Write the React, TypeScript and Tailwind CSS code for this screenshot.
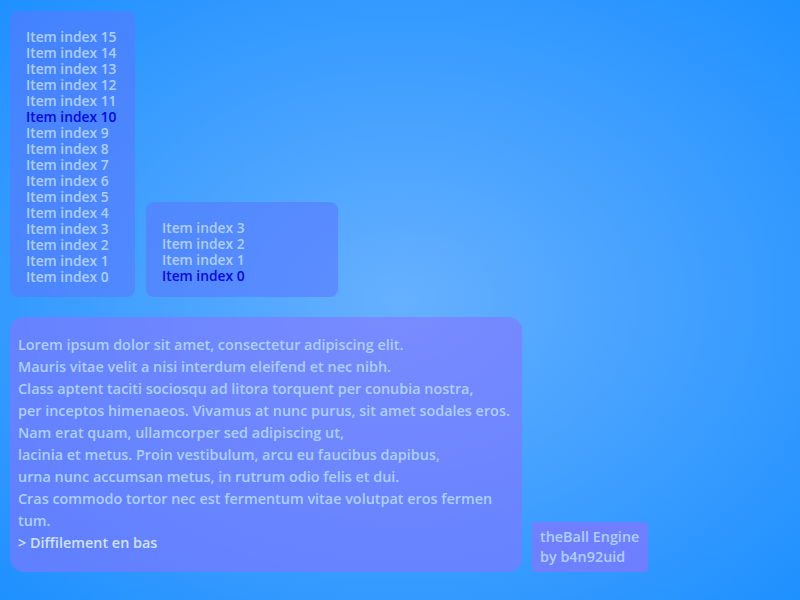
const bigList = Array.from({ length: 16 }, (_, i) => 15 - i)
const smallList = [3, 2, 1, 0]

const lines = [
  "Lorem ipsum dolor sit amet, consectetur adipiscing elit.",
  "Mauris vitae velit a nisi interdum eleifend et nec nibh.",
  "Class aptent taciti sociosqu ad litora torquent per conubia nostra,",
  "per inceptos himenaeos. Vivamus at nunc purus, sit amet sodales eros.",
  "Nam erat quam, ullamcorper sed adipiscing ut,",
  "lacinia et metus. Proin vestibulum, arcu eu faucibus dapibus,",
  "urna nunc accumsan metus, in rutrum odio felis et dui.",
  "Cras commodo tortor nec est fermentum vitae volutpat eros fermen",
  "tum.",
]

function ItemList({ items, active }: { items: number[]; active: number }) {
  return (
    <div className="flex flex-col">
      {items.map((n) => (
        <div
          key={n}
          className={
            n === active
              ? "h-4 whitespace-nowrap text-[13.8px] leading-4 text-[#0808e0]"
              : "h-4 whitespace-nowrap text-[13.8px] leading-4 text-[#aed0ff]"
          }
        >
          Item index {n}
        </div>
      ))}
    </div>
  )
}

export default function App() {
  return (
    <div
      className="flex h-[600px] w-[800px] flex-col gap-5 bg-[radial-gradient(ellipse_at_center,#66b0ff_0%,#1e90ff_100%)] px-[10px] pt-[11px] font-semibold"
      style={{ fontFamily: "'Open Sans', Lato, sans-serif" }}
    >
      <div className="flex items-end gap-[11px]">
        <div className="h-[286px] w-[125px] rounded-lg bg-[rgba(90,120,255,0.6)] pl-4 pt-[18px]">
          <ItemList items={bigList} active={10} />
        </div>
        <div className="h-[95px] w-[192px] rounded-lg bg-[rgba(90,120,255,0.6)] pl-4 pt-[18px]">
          <ItemList items={smallList} active={0} />
        </div>
      </div>
      <div className="flex items-end gap-[10px]">
        <div className="h-[255px] w-[512px] rounded-[14px] bg-[rgba(135,115,255,0.6)] pl-2 pt-[17px] text-[14.4px] leading-[22px] text-[#aed0ff]">
          {lines.map((l, i) => (
            <div key={i} className="whitespace-nowrap">
              {l}
            </div>
          ))}
          <div className="text-[#cfe3ff]">&gt; Diffilement en bas</div>
        </div>
        <div className="h-[50px] w-[116px] rounded-[3px] bg-[rgba(135,115,255,0.7)] px-2 pt-[5px] text-[14.4px] leading-5 text-[#aed0ff]">
          <div className="whitespace-nowrap">theBall Engine</div>
          <div>by b4n92uid</div>
        </div>
      </div>
    </div>
  )
}
